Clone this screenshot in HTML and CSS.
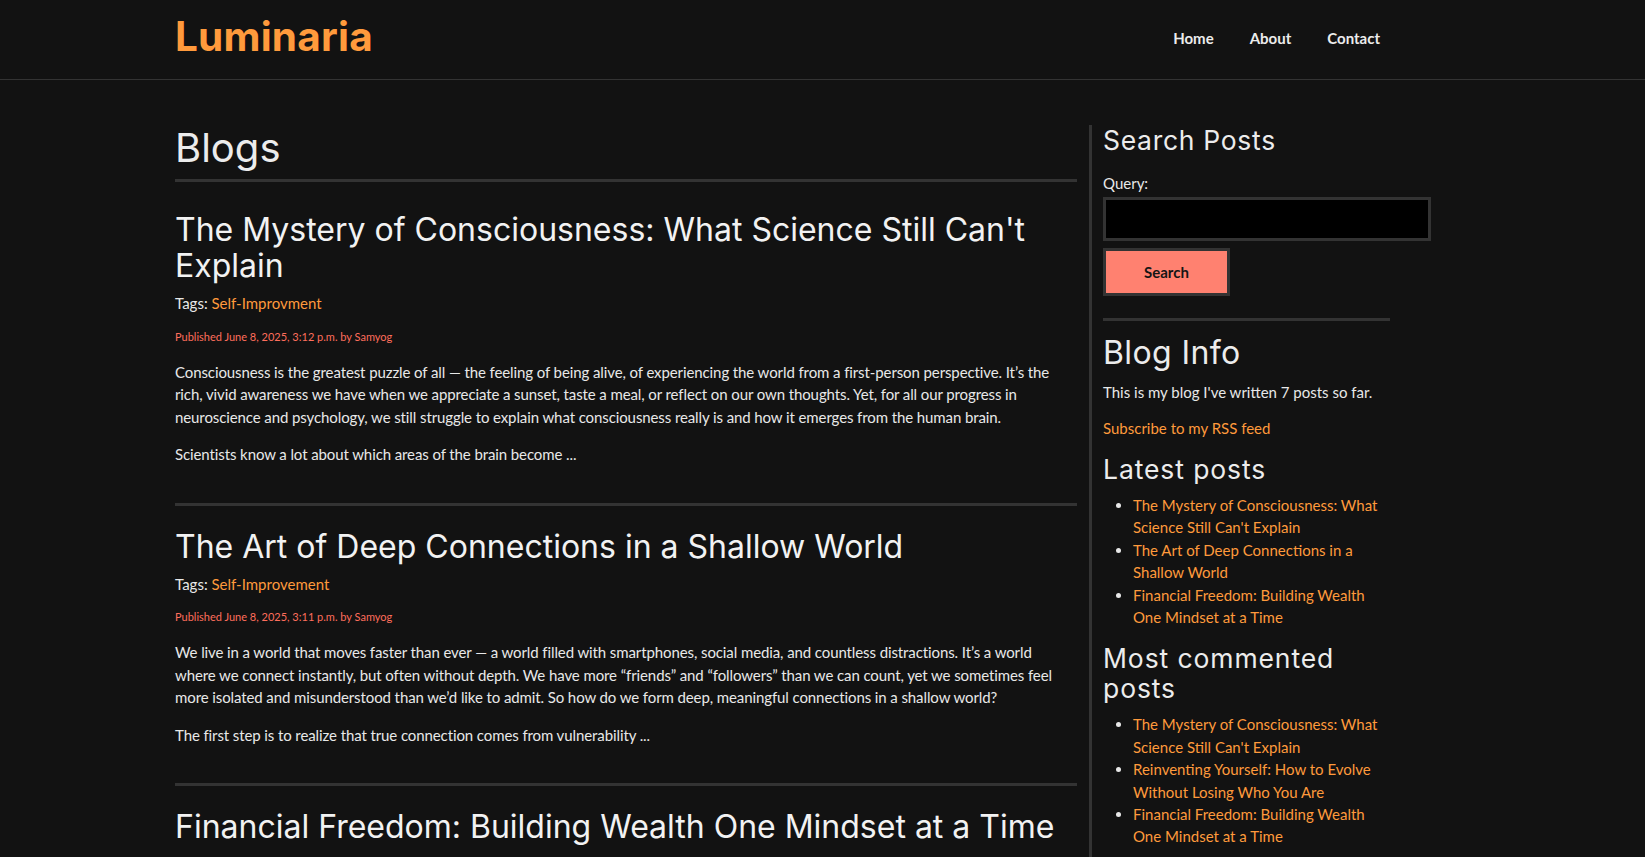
FILE: index.html
```html
<!DOCTYPE html>
<html lang="en">
<head>
<meta charset="utf-8">
<title>Luminaria - Blogs</title>
<link rel="stylesheet" href="styles.css">
</head>
<body>
<header class="site-header">
  <div class="container header-inner">
    <a class="logo" href="#">Luminaria</a>
    <nav class="nav">
      <a href="#">Home</a>
      <a href="#">About</a>
      <a href="#">Contact</a>
    </nav>
  </div>
</header>

<div class="container layout">
  <main class="content">
    <h1 class="page-title">Blogs</h1>

    <article class="post">
      <h2 class="post-title"><a href="#">The Mystery of Consciousness: What Science Still Can't Explain</a></h2>
      <p class="tags">Tags: <a href="#">Self-Improvment</a></p>
      <p class="date">Published June 8, 2025, 3:12 p.m. by Samyog</p>
      <p>Consciousness is the greatest puzzle of all — the feeling of being alive, of experiencing the world from a first-person perspective. It’s the rich, vivid awareness we have when we appreciate a sunset, taste a meal, or reflect on our own thoughts. Yet, for all our progress in neuroscience and psychology, we still struggle to explain what consciousness really is and how it emerges from the human brain.</p>
      <p>Scientists know a lot about which areas of the brain become ...</p>
    </article>

    <article class="post">
      <h2 class="post-title"><a href="#">The Art of Deep Connections in a Shallow World</a></h2>
      <p class="tags">Tags: <a href="#">Self-Improvement</a></p>
      <p class="date">Published June 8, 2025, 3:11 p.m. by Samyog</p>
      <p>We live in a world that moves faster than ever — a world filled with smartphones, social media, and countless distractions. It’s a world where we connect instantly, but often without depth. We have more “friends” and “followers” than we can count, yet we sometimes feel more isolated and misunderstood than we’d like to admit. So how do we form deep, meaningful connections in a shallow world?</p>
      <p>The first step is to realize that true connection comes from vulnerability ...</p>
    </article>

    <article class="post">
      <h2 class="post-title"><a href="#">Financial Freedom: Building Wealth One Mindset at a Time</a></h2>
    </article>
  </main>

  <aside class="sidebar">
    <h3 class="side-title search-title">Search Posts</h3>
    <form class="search-form">
      <label for="q">Query:</label>
      <input id="q" type="text" class="search-input">
      <button type="button" class="search-btn">Search</button>
    </form>
    <hr class="side-rule">
    <h2 class="info-title">Blog Info</h2>
    <p class="info-text">This is my blog I've written 7 posts so far.</p>
    <p class="info-text"><a href="#">Subscribe to my RSS feed</a></p>

    <h3 class="side-title">Latest posts</h3>
    <ul class="side-list">
      <li><a href="#">The Mystery of Consciousness: What Science Still Can't Explain</a></li>
      <li><a href="#">The Art of Deep Connections in a Shallow World</a></li>
      <li><a href="#">Financial Freedom: Building Wealth One Mindset at a Time</a></li>
    </ul>

    <h3 class="side-title">Most commented posts</h3>
    <ul class="side-list">
      <li><a href="#">The Mystery of Consciousness: What Science Still Can't Explain</a></li>
      <li><a href="#">Reinventing Yourself: How to Evolve Without Losing Who You Are</a></li>
      <li><a href="#">Financial Freedom: Building Wealth One Mindset at a Time</a></li>
    </ul>
  </aside>
</div>
</body>
</html>
```

FILE: styles.css
```css
* { box-sizing: border-box; }

html, body {
  margin: 0;
  padding: 0;
  background: #121212;
  color: #e8e8e8;
  font-family: "Lato", "Liberation Sans", sans-serif;
  font-size: 15px;
  line-height: 22.5px;
  overflow: hidden;
}

a { text-decoration: none; color: #ff9a3c; }

.container {
  width: 1215px;
  margin-left: 175px;
}

/* Header */
.site-header {
  height: 80px;
  border-bottom: 1px solid #333;
}

.header-inner {
  height: 79px;
  display: flex;
  align-items: center;
  justify-content: space-between;
}

.logo {
  font-family: "Inter", "Open Sans", sans-serif;
  font-weight: 700;
  font-size: 40.5px;
  color: #ff9a3c;
  letter-spacing: 0.2px;
  line-height: 1;
  margin-top: -4px;
}

.nav {
  display: flex;
  margin-top: -2px;
  margin-right: -8px;
}

.nav a {
  color: #ececec;
  font-weight: 700;
  font-size: 15px;
  padding: 0 18px;
}

/* Layout */
.layout {
  display: flex;
  align-items: flex-start;
  gap: 12px;
  padding-top: 40px;
}

.content {
  width: 902px;
  flex: none;
}

.page-title {
  font-family: "Inter", "Open Sans", sans-serif;
  font-weight: 400;
  font-size: 40px;
  line-height: 48px;
  margin: 0 0 11px;
  padding-top: 4px;
  color: #ececec;
  border-bottom: 3px solid #333;
  height: 62px;
}

.post {
  border-bottom: 3px solid #333;
  padding: 19px 0 22px;
}

.post + .post {
  padding-top: 23px;
}

.post-title {
  font-family: "Inter", "Open Sans", sans-serif;
  font-weight: 400;
  font-size: 32px;
  line-height: 36px;
  margin: 0 0 8px;
}

.post-title a { color: #f2f2f2; }

.post p {
  margin: 0 0 15px;
  padding-right: 8px;
  line-height: 22.5px;
  letter-spacing: -0.1px;
}

.post .tags {
  color: #e8e8e8;
  margin-bottom: 13px;
  letter-spacing: 0;
}

.post .date {
  font-size: 11px;
  line-height: 17px;
  color: #ff6e5c;
  margin-bottom: 16px;
  letter-spacing: 0;
}

/* Sidebar */
.sidebar {
  flex: none;
  width: 301px;
  margin-top: 5px;
  border-left: 3px solid #333;
  padding-left: 11px;
  min-height: 760px;
}

.side-title {
  font-family: "Inter", "Open Sans", sans-serif;
  font-weight: 400;
  font-size: 26.5px;
  letter-spacing: 0.9px;
  line-height: 30px;
  margin: 15px 0 10px;
  color: #ececec;
}

.search-title { margin-top: 0; letter-spacing: 0.7px; }

.search-form {
  margin-top: 17px;
  display: flex;
  flex-direction: column;
  align-items: flex-start;
}

.search-form label {
  line-height: 22px;
  margin-bottom: 3px;
}

.search-input {
  width: 328px;
  height: 44px;
  background: #000;
  border: 3px solid #333;
  color: #fff;
  font: inherit;
  margin: 0 0 7px;
  outline: none;
}

.search-btn {
  width: 127px;
  height: 48px;
  background: #ff8170;
  border: 3px solid #333;
  color: #151515;
  font-family: "Lato", sans-serif;
  font-weight: 700;
  font-size: 15px;
  cursor: pointer;
}

.side-rule {
  border: 0;
  border-top: 3px solid #333;
  margin: 22px 0 13px;
  height: 0;
}

.info-title {
  font-family: "Inter", "Open Sans", sans-serif;
  font-weight: 400;
  font-size: 32px;
  letter-spacing: 0.4px;
  line-height: 38px;
  margin: 0 0 9px;
  color: #ececec;
}

.info-text {
  margin: 0 0 14px;
  line-height: 22px;
}

.side-list {
  margin: 0;
  padding-left: 30px;
}

.side-list li {
  line-height: 22.4px;
}
```
